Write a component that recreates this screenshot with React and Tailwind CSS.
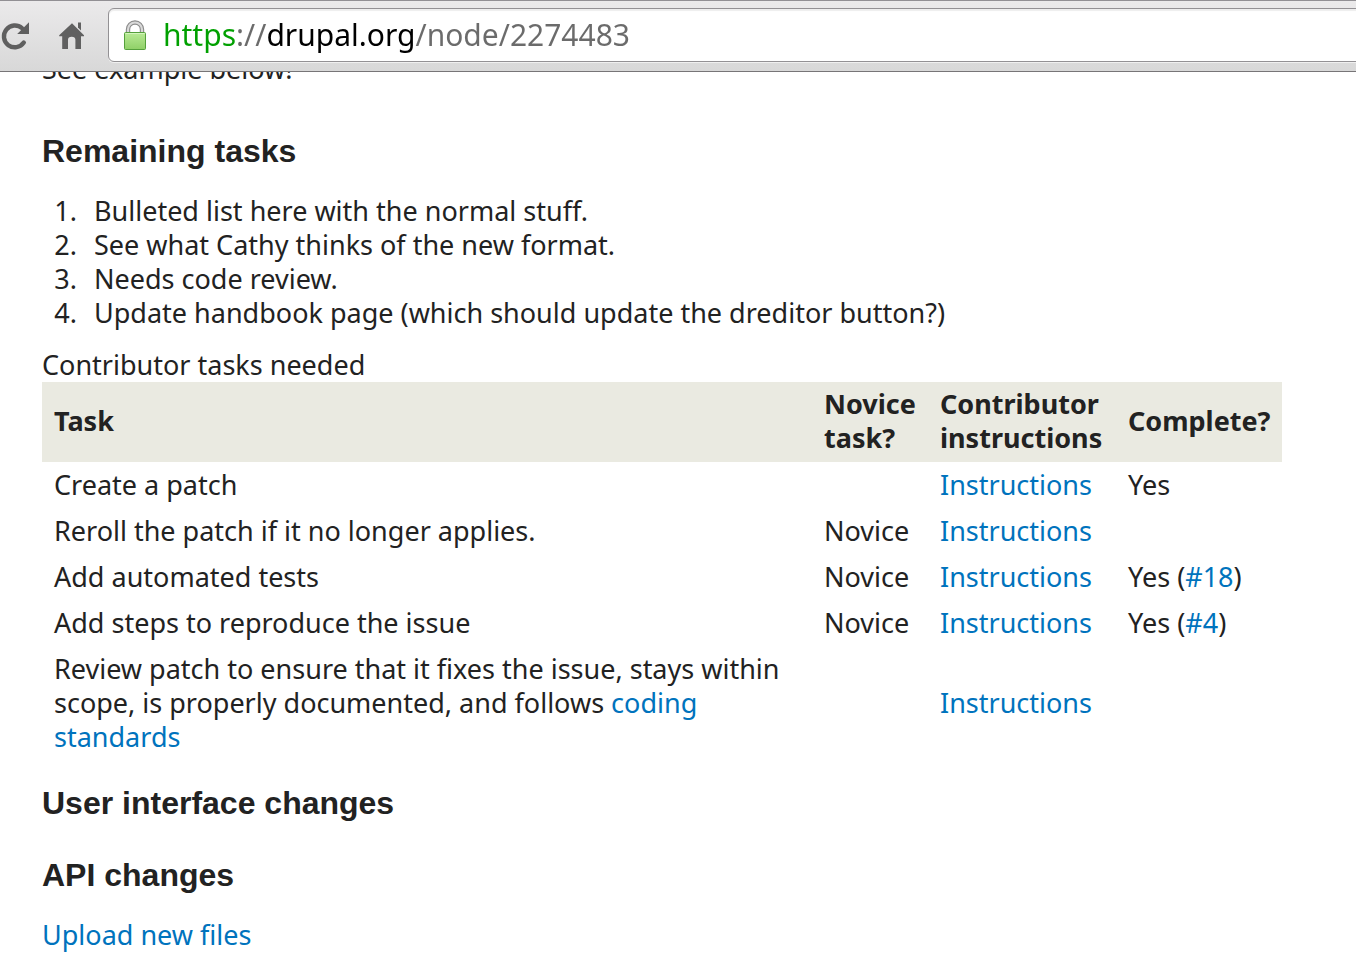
const link = "text-[#0073bd] hover:underline";

const rows = [
  { task: "Create a patch", novice: "", status: "Yes" },
  { task: "Reroll the patch if it no longer applies.", novice: "Novice", status: "" },
  { task: "Add automated tests", novice: "Novice", status: "Yes", comment: "#18" },
  { task: "Add steps to reproduce the issue", novice: "Novice", status: "Yes", comment: "#4" },
  {
    task: (
      <>
        Review patch to ensure that it fixes the issue, stays within scope, is properly documented, and follows{" "}
        <a href="#standards" className={link}>coding standards</a>
      </>
    ),
    novice: "",
    status: "",
  },
];

function ReloadIcon() {
  return (
    <svg width="30" height="30" viewBox="0 0 30 30" aria-hidden="true">
      <path d="M23.8 21.6 A10.9 10.9 0 1 1 22 7.2" fill="none" stroke="#5f5f5f" strokeWidth="4.4" strokeLinecap="round" />
      <path d="M29 1.2 V13 H17.2 Z" fill="#5f5f5f" />
    </svg>
  );
}

function HomeIcon() {
  return (
    <svg width="27" height="28" viewBox="0 0 27 28" aria-hidden="true">
      <path
        d="M14 1.2 L26 13.2 V14.2 H23 V27 H17.4 V17.8 Q17.4 14.8 13.7 14.8 Q10 14.8 10 17.8 V27 H4.2 V14.2 H1.2 V13.2 Z"
        fill="#606060"
      />
      <path d="M20 0.6 H23 V8.4 L20 5.4 Z" fill="#606060" />
    </svg>
  );
}

function LockIcon() {
  return (
    <svg width="24" height="30" viewBox="0 0 24 30" aria-hidden="true">
      <defs>
        <linearGradient id="lock" x1="0" y1="0" x2="0" y2="1">
          <stop offset="0" stopColor="#b9ea96" />
          <stop offset="1" stopColor="#8fd067" />
        </linearGradient>
      </defs>
      <path d="M5 13 V9.5 A7 7 0 0 1 19 9.5 V13" fill="none" stroke="#8b8b8b" strokeWidth="4.4" />
      <path d="M5 13 V9.5 A7 7 0 0 1 19 9.5 V13" fill="none" stroke="#d9d9d9" strokeWidth="2.2" />
      <rect x="1.5" y="12.5" width="21" height="17" rx="1" fill="url(#lock)" stroke="#55a03c" />
      <path d="M2.5 13.5 H21.5" stroke="#d4f5bd" />
    </svg>
  );
}

function Toolbar() {
  return (
    <header className="relative z-10 flex h-[72px] items-center border-t border-b border-t-[#929094] border-b-[#777577] bg-linear-to-b from-[#ebeaeb] to-[#d8d8d8]">
      <button type="button" aria-label="Reload" className="shrink-0">
        <ReloadIcon />
      </button>
      <button type="button" aria-label="Home" className="ml-7 shrink-0">
        <HomeIcon />
      </button>
      <div className="-mr-2 mb-0.5 ml-[23px] flex h-[54px] flex-1 items-center rounded-md border border-[#939194] bg-white pl-3.5 shadow-[inset_0_2px_1px_#eeeeee,0_1px_0_#f0f0f0]">
        <LockIcon />
        <input
          id="address"
          type="text"
          aria-label="Address"
          defaultValue="https://drupal.org/node/2274483"
          className="ml-4 min-w-0 flex-1 bg-[linear-gradient(90deg,#00a000_74px,#6b6b6b_74px,#6b6b6b_103px,#000000_103px,#000000_252px,#6b6b6b_252px)] bg-clip-text font-['Noto_Sans','Liberation_Sans',sans-serif] text-[30px] leading-[40px] text-transparent caret-black outline-none"
        />
      </div>
    </header>
  );
}

const heading = "font-['Liberation_Sans',Arial,sans-serif] text-[32px] leading-[40px] font-bold";

export default function App() {
  return (
    <div className="min-h-screen overflow-hidden bg-white">
      <Toolbar />
      <main className="-mt-5 pr-[74px] pb-1 pl-[42px] font-['Noto_Sans','Liberation_Sans',sans-serif] text-[27px] leading-[34px] text-[#222222]">
        <p>See example below!</p>

        <h2 className={`${heading} mt-[45px]`}>Remaining tasks</h2>
        <ol className="mt-[23px] list-decimal pl-[42px]">
          <li className="pl-2.5">Bulleted list here with the normal stuff.</li>
          <li className="pl-2.5">See what Cathy thinks of the new format.</li>
          <li className="pl-2.5">Needs code review.</li>
          <li className="pl-2.5">Update handbook page (which should update the dreditor button?)</li>
        </ol>

        <table className="mt-[18px] w-full table-fixed border-collapse text-left">
          <caption className="text-left">Contributor tasks needed</caption>
          <colgroup>
            <col />
            <col className="w-[116px]" />
            <col className="w-[188px]" />
            <col className="w-[166px]" />
          </colgroup>
          <thead className="bg-[#eaeae1]">
            <tr>
              <th scope="col" className="pt-[5px] pb-[7px] pl-3">Task</th>
              <th scope="col" className="pt-[5px] pb-[7px] pl-3">Novice task?</th>
              <th scope="col" className="pt-[5px] pb-[7px] pl-3">Contributor instructions</th>
              <th scope="col" className="pt-[5px] pb-[7px] pl-3">Complete?</th>
            </tr>
          </thead>
          <tbody>
            {rows.map((row, i) => (
              <tr key={i}>
                <td className="py-1.5 pr-6 pl-3">{row.task}</td>
                <td className="py-1.5 pl-3">{row.novice}</td>
                <td className="py-1.5 pl-3">
                  <a href="#instructions" className={link}>Instructions</a>
                </td>
                <td className="py-1.5 pl-3">
                  {row.status}
                  {row.comment && (
                    <>
                      {" "}(<a href="#comment" className={link}>{row.comment}</a>)
                    </>
                  )}
                </td>
              </tr>
            ))}
          </tbody>
        </table>

        <h2 className={`${heading} mt-[23px]`}>User interface changes</h2>
        <h2 className={`${heading} mt-8`}>API changes</h2>
        <p className="mt-[23px]">
          <a href="#upload" className={link}>Upload new files</a>
        </p>
      </main>
    </div>
  );
}
